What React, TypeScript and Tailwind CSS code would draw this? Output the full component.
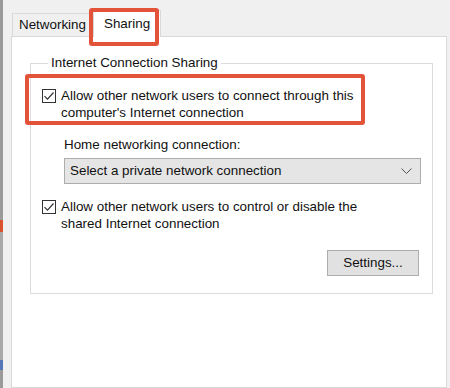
import React from "react";

const Check = () => (
  <div className="w-[14px] h-[14px] border border-[#333] bg-white flex items-center justify-center shrink-0">
    <svg width="12" height="12" viewBox="0 0 12 12" fill="none">
      <path d="M1.5 6.2 L4.5 9.2 L10.5 2.5" stroke="#333" strokeWidth="1.2" />
    </svg>
  </div>
);

const App = () => {
  return (
    <div
      className="w-[450px] h-[388px] bg-[#f0f0f0] flex relative overflow-hidden text-[13.4px] text-[#111]"
      style={{ fontFamily: "'Liberation Sans', Arial, sans-serif" }}
    >
      {/* window edge strip */}
      <div className="w-[3px] h-full flex flex-col bg-[#9a9a9a]">
        <div className="h-[220px]" />
        <div className="h-[12px] bg-[#d9532f]" />
        <div className="h-[128px] bg-[#a8a8a8]" />
        <div className="h-[10px] bg-[#5577b8]" />
      </div>

      <div className="flex flex-col pl-[8px] pt-[10px]">
        {/* tabs */}
        <div className="flex items-end h-[26px] pl-px">
          <div className="h-[23px] px-[6px] border border-b-0 border-[#d9d9d9] bg-[#f0f0f0] flex items-center">
            Networking
          </div>
          <div className="h-[27px] -mb-px px-[10px] border border-b-0 border-[#d9d9d9] bg-white flex items-center z-10 relative">
            Sharing
          </div>
        </div>

        {/* panel */}
        <div className="w-[436px] h-[360px] bg-white border border-[#d9d9d9] pl-[18px] pt-[16px]">
          <fieldset className="w-[402px] border border-[#dcdcdc] px-[11px] pb-[17px] flex flex-col">
            <legend className="ml-[6px] px-[3px]">Internet Connection Sharing</legend>
            <div className="flex gap-[5px] mt-[16px]">
              <Check />
              <div className="leading-[17px] -mt-[2px]">
                Allow other network users to connect through this
                <br />
                computer's Internet connection
              </div>
            </div>
            <div className="ml-[22px] mt-[15px] leading-[17px]">Home networking connection:</div>
            <div className="ml-[22px] mt-[5px] w-[357px] h-[26px] bg-[#e5e5e5] border border-[#adadad] flex items-center justify-between pl-[5px] pr-[8px]">
              <span>Select a private network connection</span>
              <svg width="11" height="7" viewBox="0 0 11 7" fill="none">
                <path d="M0.5 0.5 L5.5 5.5 L10.5 0.5" stroke="#555" strokeWidth="1" />
              </svg>
            </div>
            <div className="flex gap-[5px] mt-[16px]">
              <Check />
              <div className="leading-[17px] -mt-[2px]">
                Allow other network users to control or disable the
                <br />
                shared Internet connection
              </div>
            </div>
            <div className="flex justify-end mt-[18px] pr-[2px]">
              <div className="w-[92px] h-[26px] bg-[#e1e1e1] border border-[#adadad] flex items-center justify-center">
                Settings...
              </div>
            </div>
          </fieldset>
        </div>
      </div>

      {/* highlight boxes */}
      <div className="absolute left-[89px] top-[8px] w-[70px] h-[38px] border-[4px] border-[#e2533a] rounded-[3px] z-20" />
      <div className="absolute left-[25px] top-[74px] w-[340px] h-[51px] border-[4px] border-[#e2533a] rounded-[3px] z-20" />
    </div>
  );
};

export default App;
